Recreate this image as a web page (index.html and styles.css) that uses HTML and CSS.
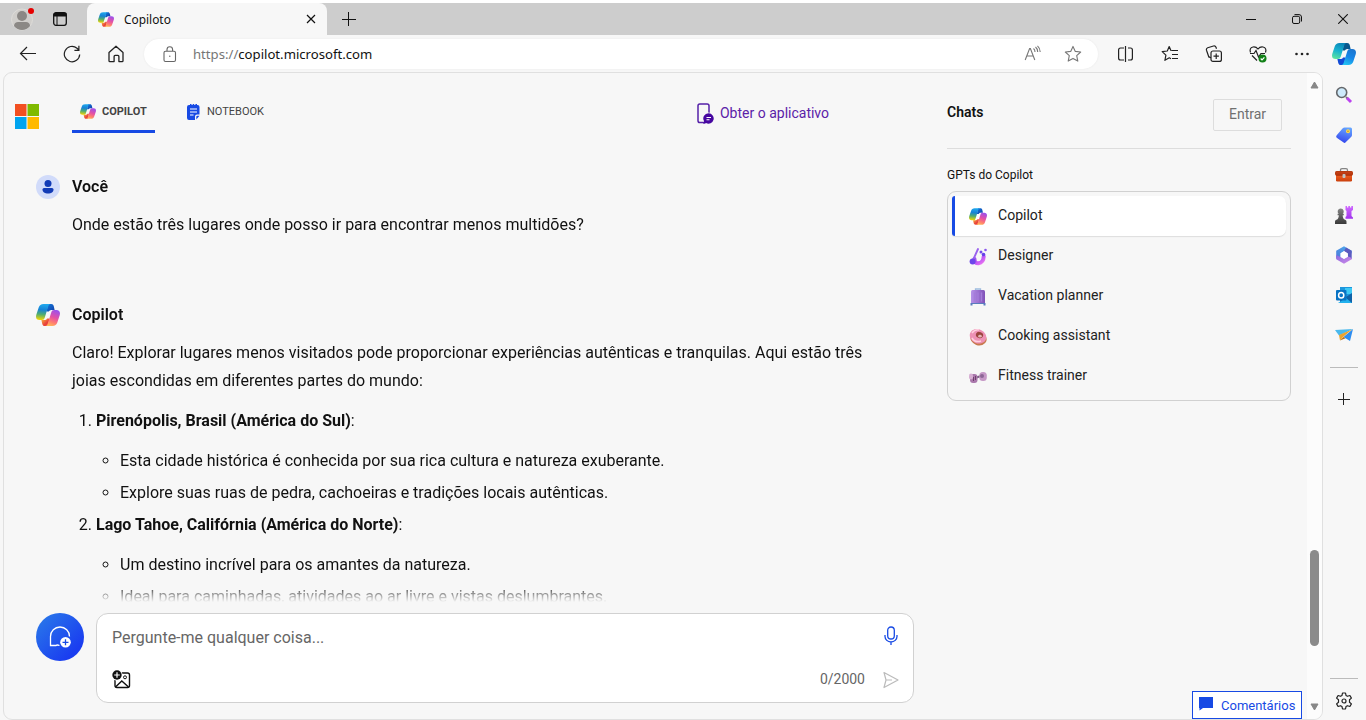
FILE: index.html
```html
<!DOCTYPE html>
<html lang="pt-BR">
<head>
<meta charset="utf-8">
<title>Copiloto</title>
<link rel="stylesheet" href="styles.css">
</head>
<body>
<svg class="defs" width="0" height="0">
  <defs>
    <linearGradient id="ga" x1="0.4" y1="0" x2="0.3" y2="1"><stop offset="0" stop-color="#20a8ed"/><stop offset=".35" stop-color="#1683d6"/><stop offset=".65" stop-color="#50ad70"/><stop offset="1" stop-color="#f8d800"/></linearGradient>
    <linearGradient id="gb" x1="0.7" y1="0" x2="0.35" y2="1"><stop offset="0" stop-color="#9a50ed"/><stop offset=".45" stop-color="#e451a5"/><stop offset=".75" stop-color="#ff7c72"/><stop offset="1" stop-color="#ffb657"/></linearGradient>
    <linearGradient id="gc" x1="0" y1="0" x2="1" y2="1"><stop offset="0" stop-color="#127bdc"/><stop offset="1" stop-color="#123da8"/></linearGradient>
    <linearGradient id="gd" x1="0" y1="0" x2="1" y2="1"><stop offset="0" stop-color="#f9c23b"/><stop offset=".6" stop-color="#e9413c"/></linearGradient>
    <linearGradient id="ge" x1=".6" y1="0" x2=".3" y2="1"><stop offset="0" stop-color="#0a86b8"/><stop offset=".5" stop-color="#18b3d0"/><stop offset="1" stop-color="#5be3a0"/></linearGradient>
    <linearGradient id="gf" x1=".7" y1="0" x2=".3" y2="1"><stop offset="0" stop-color="#1b75cf"/><stop offset=".5" stop-color="#1686e8"/><stop offset="1" stop-color="#22c3f2"/></linearGradient>
    <linearGradient id="gpurple" x1="0" y1="0" x2="1" y2="1"><stop offset="0" stop-color="#8a4cf0"/><stop offset=".6" stop-color="#c65af5"/><stop offset="1" stop-color="#ed78ef"/></linearGradient>
    <linearGradient id="gcase" x1="0" y1="0" x2="1" y2="0"><stop offset="0" stop-color="#b592e8"/><stop offset="1" stop-color="#8152b8"/></linearGradient>
    <linearGradient id="gtag" x1=".7" y1="0" x2=".4" y2="1"><stop offset="0" stop-color="#66a5ff"/><stop offset="1" stop-color="#3447ee"/></linearGradient>
    <linearGradient id="gbox" x1="0" y1="0" x2="0" y2="1"><stop offset="0" stop-color="#c74118"/><stop offset=".35" stop-color="#b0330b"/><stop offset=".45" stop-color="#e9581c"/><stop offset="1" stop-color="#c9400d"/></linearGradient>
    <linearGradient id="gpawn" x1="0" y1="0" x2="0" y2="1"><stop offset="0" stop-color="#858585"/><stop offset="1" stop-color="#393939"/></linearGradient>
    <linearGradient id="grook" x1="0" y1="0" x2="0" y2="1"><stop offset="0" stop-color="#d06bff"/><stop offset="1" stop-color="#a034ed"/></linearGradient>
    <linearGradient id="gm1" x1="0" y1="1" x2="1" y2="0"><stop offset="0" stop-color="#4a78d8"/><stop offset="1" stop-color="#4fb0f0"/></linearGradient>
    <linearGradient id="gm2" x1="0" y1="0" x2="1" y2="1"><stop offset="0" stop-color="#8a6be0"/><stop offset="1" stop-color="#d08ae8"/></linearGradient>
    <symbol id="copilot" viewBox="0 0 24 22">
      <path fill="url(#gc)" d="M12 0h3.200c1.400 0 2.200.9 2.600 2.300L18.600 6h-2.600c-1.600 0-2.600.5-3.100 1.500H10.500z"/>
      <path fill="url(#gd)" d="M12 22H8.800c-1.400 0-2.200-.9-2.600-2.300L5.400 16h2.600c1.600 0 2.600-.5 3.100-1.500H13.500z"/>
      <path fill="url(#ga)" d="M7.600 0h7c-1.300.2-1.900 1-2.400 2.600L8.800 13.500C8.300 15.200 7.500 16 5.800 16H3.600C.7 16-.6 14 .3 10.800L2.700 3.500C3.500 1.200 4.900 0 7.600 0z"/>
      <path fill="url(#gb)" d="M16.400 22h-7c1.300-.2 1.900-1 2.400-2.600L15.200 8.500C15.700 6.800 16.500 6 18.200 6h2.200c2.900 0 4.200 2 3.300 5.200l-2.400 7.300c-.8 2.300-2.200 3.500-4.900 3.500z"/>
    </symbol>
    <symbol id="copilot-blue" viewBox="0 0 24 22">
      <path fill="#08588e" d="M12 0h3.200c1.400 0 2.200.9 2.600 2.300L18.600 6h-2.600c-1.600 0-2.600.5-3.100 1.500H10.500z"/>
      <path fill="#124bd6" d="M12 22H8.800c-1.400 0-2.200-.9-2.600-2.300L5.400 16h2.600c1.600 0 2.600-.5 3.100-1.500H13.500z"/>
      <path fill="url(#ge)" d="M7.600 0h7c-1.300.2-1.900 1-2.400 2.600L8.800 13.500C8.300 15.200 7.500 16 5.800 16H3.600C.7 16-.6 14 .3 10.800L2.700 3.500C3.500 1.200 4.900 0 7.600 0z"/>
      <path fill="url(#gf)" d="M16.400 22h-7c1.300-.2 1.900-1 2.400-2.600L15.200 8.500C15.700 6.800 16.500 6 18.200 6h2.200c2.900 0 4.200 2 3.300 5.200l-2.400 7.300c-.8 2.300-2.200 3.500-4.900 3.500z"/>
    </symbol>
  </defs>
</svg>

<header class="tabbar">
  <svg class="profile" width="24" height="24" viewBox="0 0 24 24"><circle cx="11" cy="12.500" r="10.500" fill="#d0cecb" stroke="#dedcd9"/><circle cx="11" cy="9" r="5" fill="#8b8885"/><path d="M3 19c0-2.500 2-4 4-4h8c2 0 4 1.500 4 4-2 2.600-5 4-8 4s-6-1.400-8-4z" fill="#8b8885"/><circle cx="20" cy="4" r="3" fill="#e60000"/></svg>
  <svg class="tabs-icon" width="16" height="16" viewBox="0 0 16 16"><rect x="1.700" y="1.700" width="12.600" height="12.600" rx="2.200" fill="none" stroke="#111" stroke-width="1.300"/><path d="M2 2.500h12V5H2zM5 5v9" stroke="#111" fill="#111"/></svg>
  <div class="tab">
    <svg width="16" height="15"><use href="#copilot"/></svg>
    <span class="tab-title">Copiloto</span>
    <svg width="10" height="10" viewBox="0 0 10 10"><path d="M1 1l8 8M9 1L1 9" stroke="#111" stroke-width="1.200"/></svg>
  </div>
  <svg class="new-tab" width="14" height="14" viewBox="0 0 14 14"><path d="M6.500 0v14M0 7.500h14" stroke="#111"/></svg>
  <div class="window-buttons">
    <svg width="10" height="10" viewBox="0 0 10 10"><path d="M0 5.500h10" stroke="#111"/></svg>
    <svg width="10" height="10" viewBox="0 0 10 10" fill="none" stroke="#111"><rect x=".5" y="2.300" width="7.200" height="7.200" rx="1.500"/><path d="M2.500.6H7A2.500 2.500 0 0 1 9.500 3v4.500"/></svg>
    <svg width="10" height="10" viewBox="0 0 10 10"><path d="M.2.200l9.600 9.600M9.800.200L.2 9.800" stroke="#111" stroke-width="1.100"/></svg>
  </div>
</header>

<div class="toolbar">
  <div class="cell"><svg width="18" height="18" viewBox="0 0 18 18" fill="none" stroke="#222" stroke-width="1.200"><path d="M17 8.500H1.500M8 2L1.500 8.500 8 15"/></svg></div>
  <div class="cell"><svg width="18" height="18" viewBox="0 0 18 18" fill="none" stroke="#222" stroke-width="1.200"><path d="M16.700 9.500A7.700 7.700 0 1 1 14 3.200l1.700 1.600M15.900 .8v4.500h-4.500"/></svg></div>
  <div class="cell"><svg width="18" height="18" viewBox="0 0 18 18" fill="none" stroke="#222" stroke-width="1.300" stroke-linejoin="round"><path d="M2 7.500L9 1.200l7 6.300v8.200q0 .9-.9.900h-3.200v-5.200q0-1-1-1H8.100q-1 0-1 1v5.200H2.900q-.9 0-.9-.9z"/></svg></div>
  <div class="address">
    <svg class="lock" width="14" height="17" viewBox="0 0 14 17" fill="none" stroke="#666" stroke-width="1.100"><rect x="1" y="5.200" width="11.500" height="10.300" rx="1.500"/><path d="M4 5V3.500a2.800 2.800 0 0 1 5.600 0V5"/><circle cx="6.800" cy="10.300" r=".7" fill="#666" stroke="none"/></svg>
    <span class="url"><span class="scheme">https://</span>copilot.microsoft.com</span>
    <svg class="read" width="18" height="18" viewBox="0 0 18 18" fill="none" stroke="#777" stroke-width="1.100"><path d="M1.200 15L5.600 3.500h.8L10.800 15M2.700 11h6.600M9.500 3.500q1.500 1.200 1.500 3.500M11.500 2q2.200 1.700 2.200 5M13.500.8q2.700 2.400 2.700 6.200"/></svg>
    <svg class="star" width="18" height="18" viewBox="0 0 18 18" fill="none" stroke="#777" stroke-width="1.100" stroke-linejoin="round"><path d="M9 1.400l2.300 5 5.400.6-4 3.700 1.100 5.400L9 13.400l-4.800 2.700 1.100-5.400-4-3.700 5.400-.6z"/></svg>
  </div>
  <div class="cell"><svg width="18" height="18" viewBox="0 0 18 18" fill="none" stroke="#222" stroke-width="1.200"><path d="M7 3H3.500Q1.600 3 1.600 5v8q0 2 1.900 2H7M11 3h2.500q1.900 0 1.900 2v8q0 2-1.900 2H11M8.500 1v16"/></svg></div>
  <div class="cell"><svg width="18" height="18" viewBox="0 0 18 18" fill="none" stroke="#222" stroke-width="1.200" stroke-linejoin="round"><path d="M10.500 5.500H17M11 9.500h6M11 13.500h6M10 5.800L8.200 1.600 6.300 6 1.200 6.600l3.700 3.500-1 5.200 4.400-2.500 1.700.9"/></svg></div>
  <div class="cell"><svg width="18" height="18" viewBox="0 0 18 18" fill="none" stroke="#222" stroke-width="1.200"><rect x="6" y="6" width="10.400" height="10.400" rx="2"/><path d="M11.200 8.500v5.400M8.500 11.200h5.400M4 12.500L1.500 5.200q-.5-1.800 1.200-2.500L8.500 1q1.800-.5 2.500 1.200l.5 1.600M6 12.500q-1.500.3-2-1"/></svg></div>
  <div class="cell"><svg width="18" height="18" viewBox="0 0 18 18" fill="none" stroke="#222" stroke-width="1.200"><path d="M1.500 7.500Q0 3 4 2q3-.5 5 2 2-2.500 5-2 4 1 2.500 5.500M3 10.500l5 5M1 8.500h4l2-3 2.500 6.500L12 8.500h4"/><circle cx="13.500" cy="13.500" r="4" fill="#128017" stroke="none"/><path d="M11.700 13.500l1.300 1.300 2.400-2.500" stroke="#fff"/></svg></div>
  <div class="cell"><svg width="18" height="18" viewBox="0 0 18 18" fill="#222"><circle cx="3.500" cy="9" r="1.300"/><circle cx="9" cy="9" r="1.300"/><circle cx="14.500" cy="9" r="1.300"/></svg></div>
  <div class="cell edge-copilot"><svg width="24" height="22"><use href="#copilot-blue"/></svg></div>
</div>

<div class="workspace">
  <div class="page">
    <main class="main">
      <nav class="nav">
        <svg class="ms-logo" width="24" height="25" viewBox="0 0 24 25"><path fill="#f25022" d="M0 0h11.500v12H0z"/><path fill="#7fba00" d="M12.500 0H24v12H12.500z"/><path fill="#00a4ef" d="M0 13h11.500v12H0z"/><path fill="#ffb900" d="M12.500 13H24v12H12.500z"/></svg>
        <div class="nav-item active"><svg width="16" height="15"><use href="#copilot"/></svg><span>COPILOT</span></div>
        <div class="nav-item notebook"><svg width="13" height="16" viewBox="0 0 13 16"><path fill="#174ae4" d="M2 1h1V0h1.500v1h1.200V0h1.500v1h1.200V0H10v1h.5Q12.500 1 12.500 3v7.500H10q-2 0-2 2V16H2q-2 0-2-2V3q0-2 2-2zM9.300 15.500v-2.700q0-1 1-1h2.200z"/><path d="M3 5h7M3 8h7M3 11h3.500" stroke="#fff" stroke-width="1.100"/></svg><span>NOTEBOOK</span></div>
        <div class="get-app"><svg width="18" height="22" viewBox="0 0 18 22"><rect x="1" y="1" width="11" height="18.500" rx="1.800" fill="none" stroke="#5520a8" stroke-width="1.500"/><circle cx="11.700" cy="15.500" r="6" fill="#f7f7f7"/><path d="M11.700 10.300a5.200 5.200 0 1 1-2.600 9.800l-2.800.8.700-2.800a5.200 5.200 0 0 1 4.700-7.800z" fill="#4607a0"/><path d="M9.500 14.500h4.500M9.500 16.700h3" stroke="#fff" stroke-width="1.100"/></svg><span>Obter o aplicativo</span></div>
      </nav>

      <section class="conversation">
        <div class="author">
          <svg width="24" height="24" viewBox="0 0 24 24"><circle cx="12" cy="12" r="12" fill="#d1dbfa"/><circle cx="12" cy="8.500" r="3.500" fill="#123bb6"/><path fill="#123bb6" d="M8 13h8q1.500 0 1.500 1.500c0 2.800-2.500 4-5.500 4s-5.500-1.200-5.500-4Q6.500 13 8 13z"/></svg>
          <span>Você</span>
        </div>
        <p class="question">Onde estão três lugares onde posso ir para encontrar menos multidões?</p>
        <div class="author reply">
          <svg width="24" height="22"><use href="#copilot"/></svg>
          <span>Copilot</span>
        </div>
        <div class="answer">
          <p>Claro! Explorar lugares menos visitados pode proporcionar experiências autênticas e tranquilas. Aqui estão três joias escondidas em diferentes partes do mundo:</p>
          <ol>
            <li><b>Pirenópolis, Brasil (América do Sul)</b>:
              <ul><li>Esta cidade histórica é conhecida por sua rica cultura e natureza exuberante.</li><li>Explore suas ruas de pedra, cachoeiras e tradições locais autênticas.</li></ul>
            </li>
            <li><b>Lago Tahoe, Califórnia (América do Norte)</b>:
              <ul><li>Um destino incrível para os amantes da natureza.</li><li>Ideal para caminhadas, atividades ao ar livre e vistas deslumbrantes.</li></ul>
            </li>
          </ol>
        </div>
      </section>

      <section class="composer">
        <div class="new-topic"><svg width="24" height="24" viewBox="0 0 24 24" fill="none" stroke="#fff" stroke-width="1.300"><path d="M11.500 20.500q-2.500-1-3.500 0H2.500v-9a9.500 9.500 0 0 1 19 0"/><circle cx="17.500" cy="17.300" r="5.300" fill="#fff" stroke="none"/><path d="M17.500 14.300v6M14.500 17.300h6" stroke="#174ae4"/></svg></div>
        <div class="input">
          <div class="input-row"><span class="placeholder">Pergunte-me qualquer coisa...</span>
            <svg class="mic" width="14" height="20" viewBox="0 0 14 20" fill="none" stroke="#174ae4" stroke-width="1.300"><rect x="3.700" y="1" width="6.600" height="12" rx="3.300"/><path d="M1 9v1.500a6 5.500 0 0 0 12 0V9M7 16v3"/></svg>
          </div>
          <div class="input-row bottom">
            <svg class="add-image" width="19" height="19" viewBox="0 0 19 19"><rect x="3" y="3" width="14.500" height="14.500" rx="2" fill="none" stroke="#111" stroke-width="1.400"/><path d="M3.500 17l6.300-6 6.700 6" fill="none" stroke="#111" stroke-width="1.400"/><circle cx="13" cy="7.300" r="1.500" fill="none" stroke="#111"/><circle cx="5" cy="5" r="5.500" fill="#fff"/><circle cx="5" cy="5" r="4.700" fill="#111"/><path d="M5 2.200v5.600M2.200 5h5.600" stroke="#fff" stroke-width="1.200"/></svg>
            <span class="counter">0/2000</span>
            <svg class="send" width="16" height="18" viewBox="0 0 16 18" fill="none" stroke="#bbb" stroke-width="1.200" stroke-linejoin="round"><path d="M1 1.500L15 9 1 16.500 3 9zM3 9h6"/></svg>
          </div>
        </div>
      </section>
    </main>

    <aside class="side">
      <div class="side-head"><b>Chats</b><button class="login">Entrar</button></div>
      <div class="gpt-title">GPTs do Copilot</div>
      <div class="gpts">
        <div class="gpt selected"><svg width="18" height="17"><use href="#copilot"/></svg><span>Copilot</span></div>
        <div class="gpt"><svg width="18" height="18" viewBox="0 0 18 18"><path d="M5.500 11Q5.500 15.500 9.500 15.300 14.500 14.500 14.700 8.500" fill="none" stroke="url(#gpurple)" stroke-width="4" stroke-linecap="round"/><path d="M9 1L4.500 11" stroke="#9a62ee" stroke-width="1.900" stroke-linecap="round"/><circle cx="3.600" cy="13.500" r="3" fill="#6d46ea"/><circle cx="12" cy="4" r="1.500" fill="#7649ee"/><circle cx="16.500" cy="2" r="1.300" fill="#8a56ee"/><circle cx="14.500" cy="6.500" r="1.800" fill="#6540e8"/></svg><span>Designer</span></div>
        <div class="gpt"><svg width="18" height="18" viewBox="0 0 18 18"><path d="M6.500 3V1h5v2" fill="none" stroke="#9ebcdf" stroke-width="1.300"/><rect x="2" y="2" width="14" height="14" rx="1.500" fill="url(#gcase)"/><path d="M5.500 4.500v9M9 4.500v9M12.500 4.500v9" stroke="#a57cda" stroke-width="1.300"/><path d="M1.500 15v2.500h2V16h11v1.500h2V15z" fill="#5a7dbd"/></svg><span>Vacation planner</span></div>
        <div class="gpt"><svg width="18" height="18" viewBox="0 0 18 18"><ellipse cx="9.500" cy="10.500" rx="8.300" ry="6.800" transform="rotate(20 9.500 10.500)" fill="#c8794d"/><ellipse cx="9" cy="8.300" rx="8.500" ry="7" transform="rotate(25 9 8.300)" fill="#ed91b5"/><path d="M3 5q3-4 7-3M3 10q3 5 9 3" stroke="#ffd0df" stroke-width="1.500" fill="none"/><ellipse cx="10.500" cy="7" rx="3.700" ry="3" transform="rotate(25 10.500 7)" fill="#9c443f"/><ellipse cx="11" cy="8.200" rx="1.800" ry="1.400" fill="#e4b7b7"/></svg><span>Cooking assistant</span></div>
        <div class="gpt"><svg width="18" height="18" viewBox="0 0 18 18"><path d="M6 10l6-2" stroke="#776080" stroke-width="2"/><rect x="1" y="6" width="7.500" height="9" rx="3" fill="#aa78ac"/><rect x="0" y="5.500" width="4" height="6" rx="2" fill="#d7afd3"/><rect x="10.300" y="4" width="7.500" height="9" rx="3.500" fill="#c698c6"/><circle cx="13" cy="8" r="2" fill="#8d6696"/><path d="M4.500 9v4M6.500 8v4" stroke="#70406d"/></svg><span>Fitness trainer</span></div>
      </div>
      <div class="feedback"><svg width="14" height="14" viewBox="0 0 14 14"><path fill="#174ae4" d="M0 0h14v11H4l-3.500 2.500V11H0z"/></svg><span>Comentários</span></div>
    </aside>

    <div class="scrollbar">
      <svg width="9" height="8" viewBox="0 0 9 8"><path d="M4.500 1L8 7H1z" fill="#888" stroke="#888" stroke-linejoin="round"/></svg>
      <div class="thumb"></div>
      <svg width="9" height="8" viewBox="0 0 9 8"><path d="M4.500 7L8 1H1z" fill="#888" stroke="#888" stroke-linejoin="round"/></svg>
    </div>
  </div>

  <div class="rail">
    <div class="rail-item"><svg width="18" height="18" viewBox="0 0 18 18"><path d="M11 11l1.500 1.500" stroke="#777" stroke-width="2"/><path d="M12 12l4 4" stroke="#bb42ef" stroke-width="3"/><circle cx="6.700" cy="6.500" r="5" fill="#cdeafb" stroke="#64676b" stroke-width="1.600"/></svg></div>
    <div class="rail-item"><svg width="18" height="18" viewBox="0 0 18 18"><path d="M9.500 1.500h6q1.500 0 1.500 1.500v6q0 1-.7 1.700l-5.600 5.600q-1.200 1.200-2.400 0L1.700 11.700q-1.200-1.200 0-2.400L7.500 2.500q1-1 2-1z" fill="url(#gtag)"/><circle cx="13" cy="5.300" r="2" fill="#ffd84b"/><circle cx="13" cy="5.300" r=".8" fill="#b58b30"/></svg></div>
    <div class="rail-item"><svg width="18" height="18" viewBox="0 0 18 18"><path d="M5.500 6V4.200Q5.500 2.600 7 2.600h4q1.500 0 1.500 1.600V6" fill="none" stroke="#858585" stroke-width="1.300"/><rect x="0" y="5" width="18" height="4.500" rx="1.500" fill="#b63b10"/><rect x="1" y="6" width="16" height="9.500" rx="1.300" fill="url(#gbox)"/><rect x="7.500" y="8" width="3" height="4" rx="1" fill="#c0c4c4"/></svg></div>
    <div class="rail-item"><svg width="18" height="18" viewBox="0 0 18 18"><path fill="url(#grook)" d="M10.500 0h1.500v1.500h1.300V0h1.700v1.500h1.300V0H18v4l-1.500 1v5l1.500 1.500v1.300h-7.500V11l1-1V5l-1-1z"/><path fill="url(#gpawn)" d="M5.700 2.500a3 3 0 0 1 2 5.300h1.100v1.500H7.700c0 1.700.5 2.900 1.300 4 1.700.4 2.500 1.200 2.500 2.400V18H0v-2.300c0-1.200.8-2 2.500-2.400.8-1.100 1.300-2.300 1.300-4H2.600V7.800h1.100a3 3 0 0 1 2-5.300z"/></svg></div>
    <div class="rail-item"><svg width="18" height="18" viewBox="0 0 18 18"><path fill="url(#gm1)" d="M9 .3L1.200 4.800v8L5.500 11V7.200L10 4.600l6.700 3V4.800z"/><path fill="#5b5bc0" d="M16.700 4.800v8.400L13 11V7.500L9 5l2-3.500z"/><path fill="url(#gm2)" d="M1.200 9v4.200L9 17.700l7.700-4.500V12l-3.200-1.500L9 13 5.500 11z"/><path fill="#fff" d="M9 5.300l3.300 1.900v3.600L9 12.700l-3.300-1.900V7.200z"/></svg></div>
    <div class="rail-item"><svg width="18" height="18" viewBox="0 0 18 18"><path fill="#1c97dd" d="M5 1h12v16H5z"/><path fill="#3dc9f5" d="M10 2h7v6h-7z"/><path fill="#0f62a8" d="M5 7l6 4 6-4v10H5z"/><path fill="#22b1ed" d="M3 17l8-5 6 5z"/><rect x="1" y="4" width="10.500" height="10.500" rx="1" fill="#0873c4"/><ellipse cx="6.200" cy="9.200" rx="2.600" ry="2.800" fill="none" stroke="#fff" stroke-width="1.500"/></svg></div>
    <div class="rail-item"><svg width="18" height="18" viewBox="0 0 18 18"><path d="M0 4l18-1L4 9.500z" fill="#4ab9ed"/><path d="M18 3l-3 12-6.500-4z" fill="#2d8df0"/><path d="M4 9l13-5.500-9 7.500-3 3.500z" fill="#eba32e"/><path d="M5 14.500L8.500 11l2 1.200z" fill="#b86b10"/></svg></div>
    <div class="rule"></div>
    <div class="rail-item add"><svg width="12" height="12" viewBox="0 0 12 12"><path d="M5.500 0v12M0 6.500h12" stroke="#222"/></svg></div>
    <div class="rule settings-rule"></div>
    <div class="rail-item settings"><svg width="18" height="18" viewBox="0 0 18 18" fill="none" stroke="#222" stroke-width="1.200" stroke-linejoin="round"><path d="M7.500 1h3l.5 2.400 1.500.9 2.400-.8 1.500 2.600-1.900 1.700v2.400l1.900 1.700-1.500 2.600-2.400-.8-1.500.9-.5 2.400h-3L7 14.600l-1.500-.9-2.400.8-1.500-2.600 1.900-1.700V7.800L1.600 6.100l1.500-2.600 2.400.8L7 3.400z"/><circle cx="9" cy="9" r="2"/></svg></div>
  </div>
</div>
</body>
</html>
```

FILE: styles.css
```css
* { box-sizing: border-box; }
body {
  margin: 0; width: 1366px; height: 720px; overflow: hidden;
  background: #f7f7f7; color: #111; font-family: Roboto, sans-serif;
  display: flex; flex-direction: column;
}
svg { display: block; flex: none; }
.defs { position: absolute; }
p, ul, ol { margin: 0; }

.tabbar { height: 35px; border-top: 3px solid #fff; background: #cdcdcd; display: flex; align-items: center; flex: none; padding-left: 11px; }
.tabs-icon { margin-left: 17px; }
.tab { margin-left: 19px; width: 240px; height: 32px; background: #f7f7f7; border-radius: 8px 8px 0 0; display: flex; align-items: center; padding: 0 11px; font: 11.900px "Noto Sans", sans-serif; }
.tab-title { margin: -1px 0 0 10px; flex: 1; }
.new-tab { margin-left: 15px; }
.window-buttons { margin-left: auto; display: flex; gap: 36px; padding-right: 18px; }

.toolbar { height: 37px; flex: none; display: flex; align-items: center; padding-left: 6px; }
.cell { width: 44px; display: flex; justify-content: center; flex: none; }
.edge-copilot { width: 40px; }
.address { width: 954px; height: 30px; flex: none; margin: 1px 6px 0 6px; border-radius: 15px; background: #fff; display: flex; align-items: center; padding: 0 16px 0 19px; box-shadow: 0 0 2px #e6e6e6; }
.url { font: 13.150px "Noto Sans", sans-serif; margin-left: 16px; flex: 1; color: #111; }
.scheme { color: #767676; }
.star { margin-left: 22px; }

.workspace { flex: 1; min-height: 0; display: flex; }
.page { width: 1320px; height: 648px; margin-left: 3px; flex: none; border: 1px solid #e0e0e0; border-radius: 9px; display: flex; overflow: hidden; }
.main { width: 943px; flex: none; display: flex; flex-direction: column; }

.nav { height: 70px; flex: none; display: flex; align-items: flex-start; padding-left: 11px; font-size: 11px; color: #444; }
.ms-logo { margin-top: 31px; }
.nav-item { display: flex; align-items: center; gap: 6px; margin-top: 18px; height: 42px; padding-top: 2px; }
.active { margin-left: 33px; width: 83px; padding-left: 8px; border-bottom: 3px solid #174ae4; font-weight: 700; }
.notebook { margin-left: 32px; border-bottom: 3px solid transparent; gap: 7px; }
.get-app { display: flex; align-items: center; gap: 5px; margin: 30px 0 0 433px; color: #5b21a8; font-size: 14px; line-height: 20px; }
.get-app span { margin-top: -2px; }

.conversation { height: 459px; flex: none; overflow: hidden; padding: 32px 60px 0 32px; font-size: 16px; line-height: 28px; -webkit-mask-image: linear-gradient(#000 440px, transparent 459px); mask-image: linear-gradient(#000 440px, transparent 459px); }
.author { height: 24px; display: flex; align-items: center; gap: 12px; font-weight: 600; }
.question { padding: 12px 0 0 36px; }
.reply { margin-top: 64px; }
.answer { padding: 12px 0 0 36px; }
.answer ol { padding-left: 24px; margin-top: 12px; }
.answer b { font-weight: 700; }
.answer ul { padding-left: 24px; margin: 12px 0 4px; list-style: circle; }
.answer ul li + li { margin-top: 4px; }

.composer { display: flex; gap: 12px; padding: 11px 0 0 32px; }
.new-topic { width: 48px; height: 48px; border-radius: 50%; background: linear-gradient(135deg, #2b7de9, #1a3df0 80%); display: flex; align-items: center; justify-content: center; }
.input { width: 818px; height: 90px; border: 1px solid #d1d1d1; border-radius: 12px; background: #fff; padding: 11px 12px 0 15px; color: #666; }
.input-row { display: flex; align-items: center; height: 24px; }
.placeholder { flex: 1; font-size: 16px; }
.mic { margin: -2px 3px 0 0; }
.bottom { margin-top: 18px; }
.counter { margin-left: auto; font-size: 14px; }
.send { margin: 1px 2px 0 18px; }

.side { width: 355px; flex: none; display: flex; flex-direction: column; align-items: flex-start; }
.side-head { width: 344px; height: 76px; border-bottom: 1px solid #ddd; display: flex; justify-content: space-between; align-items: flex-start; padding: 26px 9px 0 0; font-size: 14px; line-height: 27px; }
.side-head b { font-weight: 600; }
.login { width: 69px; height: 32px; border: 1px solid #ddd; border-radius: 2px; background: #f7f7f7; color: #707070; font: 14px Roboto, sans-serif; padding: 0 0 2px; }
.gpt-title { margin-top: 18px; font-size: 12px; line-height: 17px; height: 24px; }
.gpts { width: 344px; height: 210px; border: 1px solid #d1d1d1; border-radius: 9px; padding: 4px; font-size: 14.050px; color: #222; }
.gpt { height: 40px; display: flex; align-items: center; gap: 11px; padding: 0 0 2px 17px; }
.gpt svg { margin-top: 3px; }
.selected { border-left: 3px solid #174ae4; border-radius: 3px 7px 7px 3px; background: #fff; box-shadow: 0 1px 1px #ddd; padding-left: 14px; }
.feedback { width: 110px; height: 28px; margin: auto 0 0 245px; border: 1px solid #174ae4; background: #fff; color: #174ae4; font-size: 13px; display: flex; align-items: center; gap: 8px; padding-left: 6px; }
.feedback svg { margin-bottom: 3px; }

.scrollbar { margin-left: auto; width: 15px; background: #fcfcfc; display: flex; flex-direction: column; align-items: center; padding: 8px 0; }
.thumb { width: 9px; height: 96px; border-radius: 5px; background: #8b8b8b; margin: 461px 0 auto; }

.rail { width: 43px; display: flex; flex-direction: column; align-items: center; padding: 3px 2px 0 0; }
.rail-item { height: 40px; display: flex; align-items: center; justify-content: center; flex: none; }
.rule { width: 28px; height: 1px; background: #bbb; margin-top: 12px; flex: none; }
.add { height: 24px; margin-top: 19px; }
.settings-rule { margin-top: auto; }
.settings { height: 41px; padding-top: 2px; }
```
